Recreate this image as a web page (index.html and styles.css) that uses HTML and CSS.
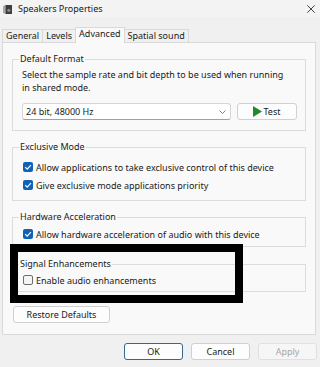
FILE: index.html
```html
<!DOCTYPE html>
<html lang="en">
<head>
    <meta charset="UTF-8">
    <meta name="viewport" content="width=device-width, initial-scale=1.0">
    <title>Speakers Properties</title>
    <link rel="stylesheet" href="styles.css">
</head>
<body>

    <div class="dialog">
        <div class="titlebar">
            <svg class="app-icon" viewBox="0 0 9 10"><path d="M0 2L2.5 1V10L0 9Z" fill="#a8a8a8"></path><rect x="2.5" y="1" width="6.5" height="9" fill="#3d3d3d"></rect><circle cx="5.8" cy="6.3" r="1.6" fill="#8a8a8a"></circle></svg>
            <span class="title">Speakers Properties</span>
            <svg class="close" viewBox="0 0 8 8"><path d="M0.3 0.3L7.7 7.7M7.7 0.3L0.3 7.7" stroke="#303030" stroke-width="0.9"></path></svg>
        </div>

        <div class="tabs">
            <div class="tab">General</div>
            <div class="tab">Levels</div>
            <div class="tab active">Advanced</div>
            <div class="tab">Spatial sound</div>
        </div>

        <div class="pane">
            <fieldset class="group group-format">
                <legend>Default Format</legend>
                <p class="hint">Select the sample rate and bit depth to be used when running<br>in shared mode.</p>
                <div class="format-row">
                    <div class="combo">
                        <span>24 bit, 48000 Hz</span>
                        <svg class="chevron" viewBox="0 0 7 4"><path d="M0.5 0.5L3.5 3.5L6.5 0.5" fill="none" stroke="#666" stroke-width="0.8"></path></svg>
                    </div>
                    <button class="btn btn-test">
                        <svg class="play" viewBox="0 0 9 11"><path d="M0 0L9 5.5L0 11Z" fill="#23892b"></path></svg>
                        Test
                    </button>
                </div>
            </fieldset>

            <fieldset class="group group-exclusive">
                <legend>Exclusive Mode</legend>
                <label class="check">
                    <span class="box"><svg viewBox="0 0 10 10"><path d="M2.2 5.1L4.2 7.1L7.9 3.1" fill="none" stroke="#fff" stroke-width="1.2"></path></svg></span>
                    Allow applications to take exclusive control of this device
                </label>
                <label class="check">
                    <span class="box"><svg viewBox="0 0 10 10"><path d="M2.2 5.1L4.2 7.1L7.9 3.1" fill="none" stroke="#fff" stroke-width="1.2"></path></svg></span>
                    Give exclusive mode applications priority
                </label>
            </fieldset>

            <fieldset class="group group-hardware">
                <legend>Hardware Acceleration</legend>
                <label class="check">
                    <span class="box"><svg viewBox="0 0 10 10"><path d="M2.2 5.1L4.2 7.1L7.9 3.1" fill="none" stroke="#fff" stroke-width="1.2"></path></svg></span>
                    Allow hardware acceleration of audio with this device
                </label>
            </fieldset>

            <fieldset class="group group-signal">
                <legend>Signal Enhancements</legend>
                <label class="check">
                    <span class="box off"></span>
                    Enable audio enhancements
                </label>
            </fieldset>

            <button class="btn btn-restore">Restore Defaults</button>
        </div>

        <div class="actions">
            <button class="btn btn-default">OK</button>
            <button class="btn">Cancel</button>
            <button class="btn" disabled>Apply</button>
        </div>

        <div class="highlight"></div>
    </div>

</body>
</html>
```

FILE: styles.css
```css
:root {
    --font-ui: "Noto Sans", "Segoe UI", Arial, sans-serif;
    --dialog-bg: #f0f0f0;
    --pane-bg: #f9f9f9;
    --line: #d9d9d9;
    --text: #1a1a1a;
    --accent: #0f62b5;
}

* { box-sizing: border-box; }

body {
    margin: 0;
    font-family: var(--font-ui);
    font-size: 9px;
    color: var(--text);
    background-color: var(--dialog-bg);
}

.dialog {
    position: relative;
    width: 320px;
    height: 367px;
    background-color: var(--dialog-bg);
}

/* title bar */
.titlebar {
    display: flex;
    align-items: center;
    height: 17px;
    padding: 0 5px 0 3px;
    background-color: #f3f3f3;
}
.app-icon { width: 9px; height: 10px; margin-right: 6px; }
.title { flex: 1; font-size: 9px; }
.close { width: 8px; height: 8px; }

/* tabs */
.tabs {
    display: flex;
    align-items: flex-end;
    height: 15px;
    margin: 10px 0 0 2px;
}
.tab {
    height: 13px;
    padding: 0 3px;
    line-height: 12px;
    border: 1px solid var(--line);
    border-bottom: none;
    background-color: var(--dialog-bg);
}
.tab + .tab { margin-left: -1px; }
.tab.active {
    position: relative;
    z-index: 1;
    height: 16px;
    margin-bottom: -1px;
    line-height: 12px;
    background-color: var(--pane-bg);
}

.pane {
    margin: 0 4px 0 2px;
    padding: 10px 9px 11px 9px;
    border: 1px solid var(--line);
    background-color: var(--pane-bg);
}

/* group boxes */
.group {
    margin: 0;
    min-width: 0;
    padding: 0 8px 0 10px;
    border: 1px solid #dcdcdc;
}
.group legend {
    margin-left: -4px;
    padding: 0 1px;
    line-height: 12px;
}
.group + .group { margin-top: 10px; }

.group-format { padding-top: 3px; padding-bottom: 10px; }
.group-exclusive { padding-top: 6px; padding-bottom: 7px; }
.group-exclusive .check + .check { margin-top: 2px; }
.group-hardware { padding-top: 3px; padding-bottom: 4px; }
.group-signal { margin-top: 11px !important; padding-top: 2px; padding-bottom: 3px; }

.hint {
    margin: 0 0 0 -1px;
    line-height: 13px;
}

.format-row {
    display: flex;
    gap: 6px;
    margin-top: 9px;
}
.combo {
    display: flex;
    align-items: center;
    justify-content: space-between;
    width: 209px;
    height: 17px;
    margin-left: -1px;
    padding: 0 4px 0 3px;
    background-color: #fff;
    border: 1px solid #d6d6d6;
    border-bottom-color: #a0a0a0;
    border-radius: 3px;
}
.chevron { width: 7px; height: 4px; }

.check {
    display: flex;
    align-items: center;
    gap: 3px;
    height: 16px;
}
.box {
    display: flex;
    align-items: center;
    justify-content: center;
    width: 10px;
    height: 10px;
    border-radius: 2px;
    background-color: var(--accent);
}
.box svg { width: 10px; height: 10px; }
.box.off {
    background-color: #f4f4f4;
    border: 1px solid #6e6e6e;
}

/* buttons */
.btn {
    height: 17px;
    padding: 0;
    font-family: inherit;
    font-size: 9px;
    color: var(--text);
    background-color: #fdfdfd;
    border: 1px solid #d0d0d0;
    border-radius: 3px;
}
.btn-test {
    display: flex;
    align-items: center;
    justify-content: center;
    gap: 1px;
    width: 60px;
}
.play { width: 9px; height: 11px; }
.btn-restore { width: 97px; margin-top: 14px; margin-left: 1px; }

.actions {
    display: flex;
    justify-content: flex-end;
    gap: 8px;
    padding: 8px 3px 0 0;
}
.actions .btn { width: 59px; }
.btn-default { border-color: #35678f; }
.btn:disabled {
    color: #a6a6a6;
    background-color: #f6f6f6;
    border-color: #e0e0e0;
}

/* annotation drawn over the screenshot */
.highlight {
    position: absolute;
    left: 10px;
    top: 244px;
    width: 233px;
    height: 59px;
    border: 8px solid #000;
    pointer-events: none;
}
```
